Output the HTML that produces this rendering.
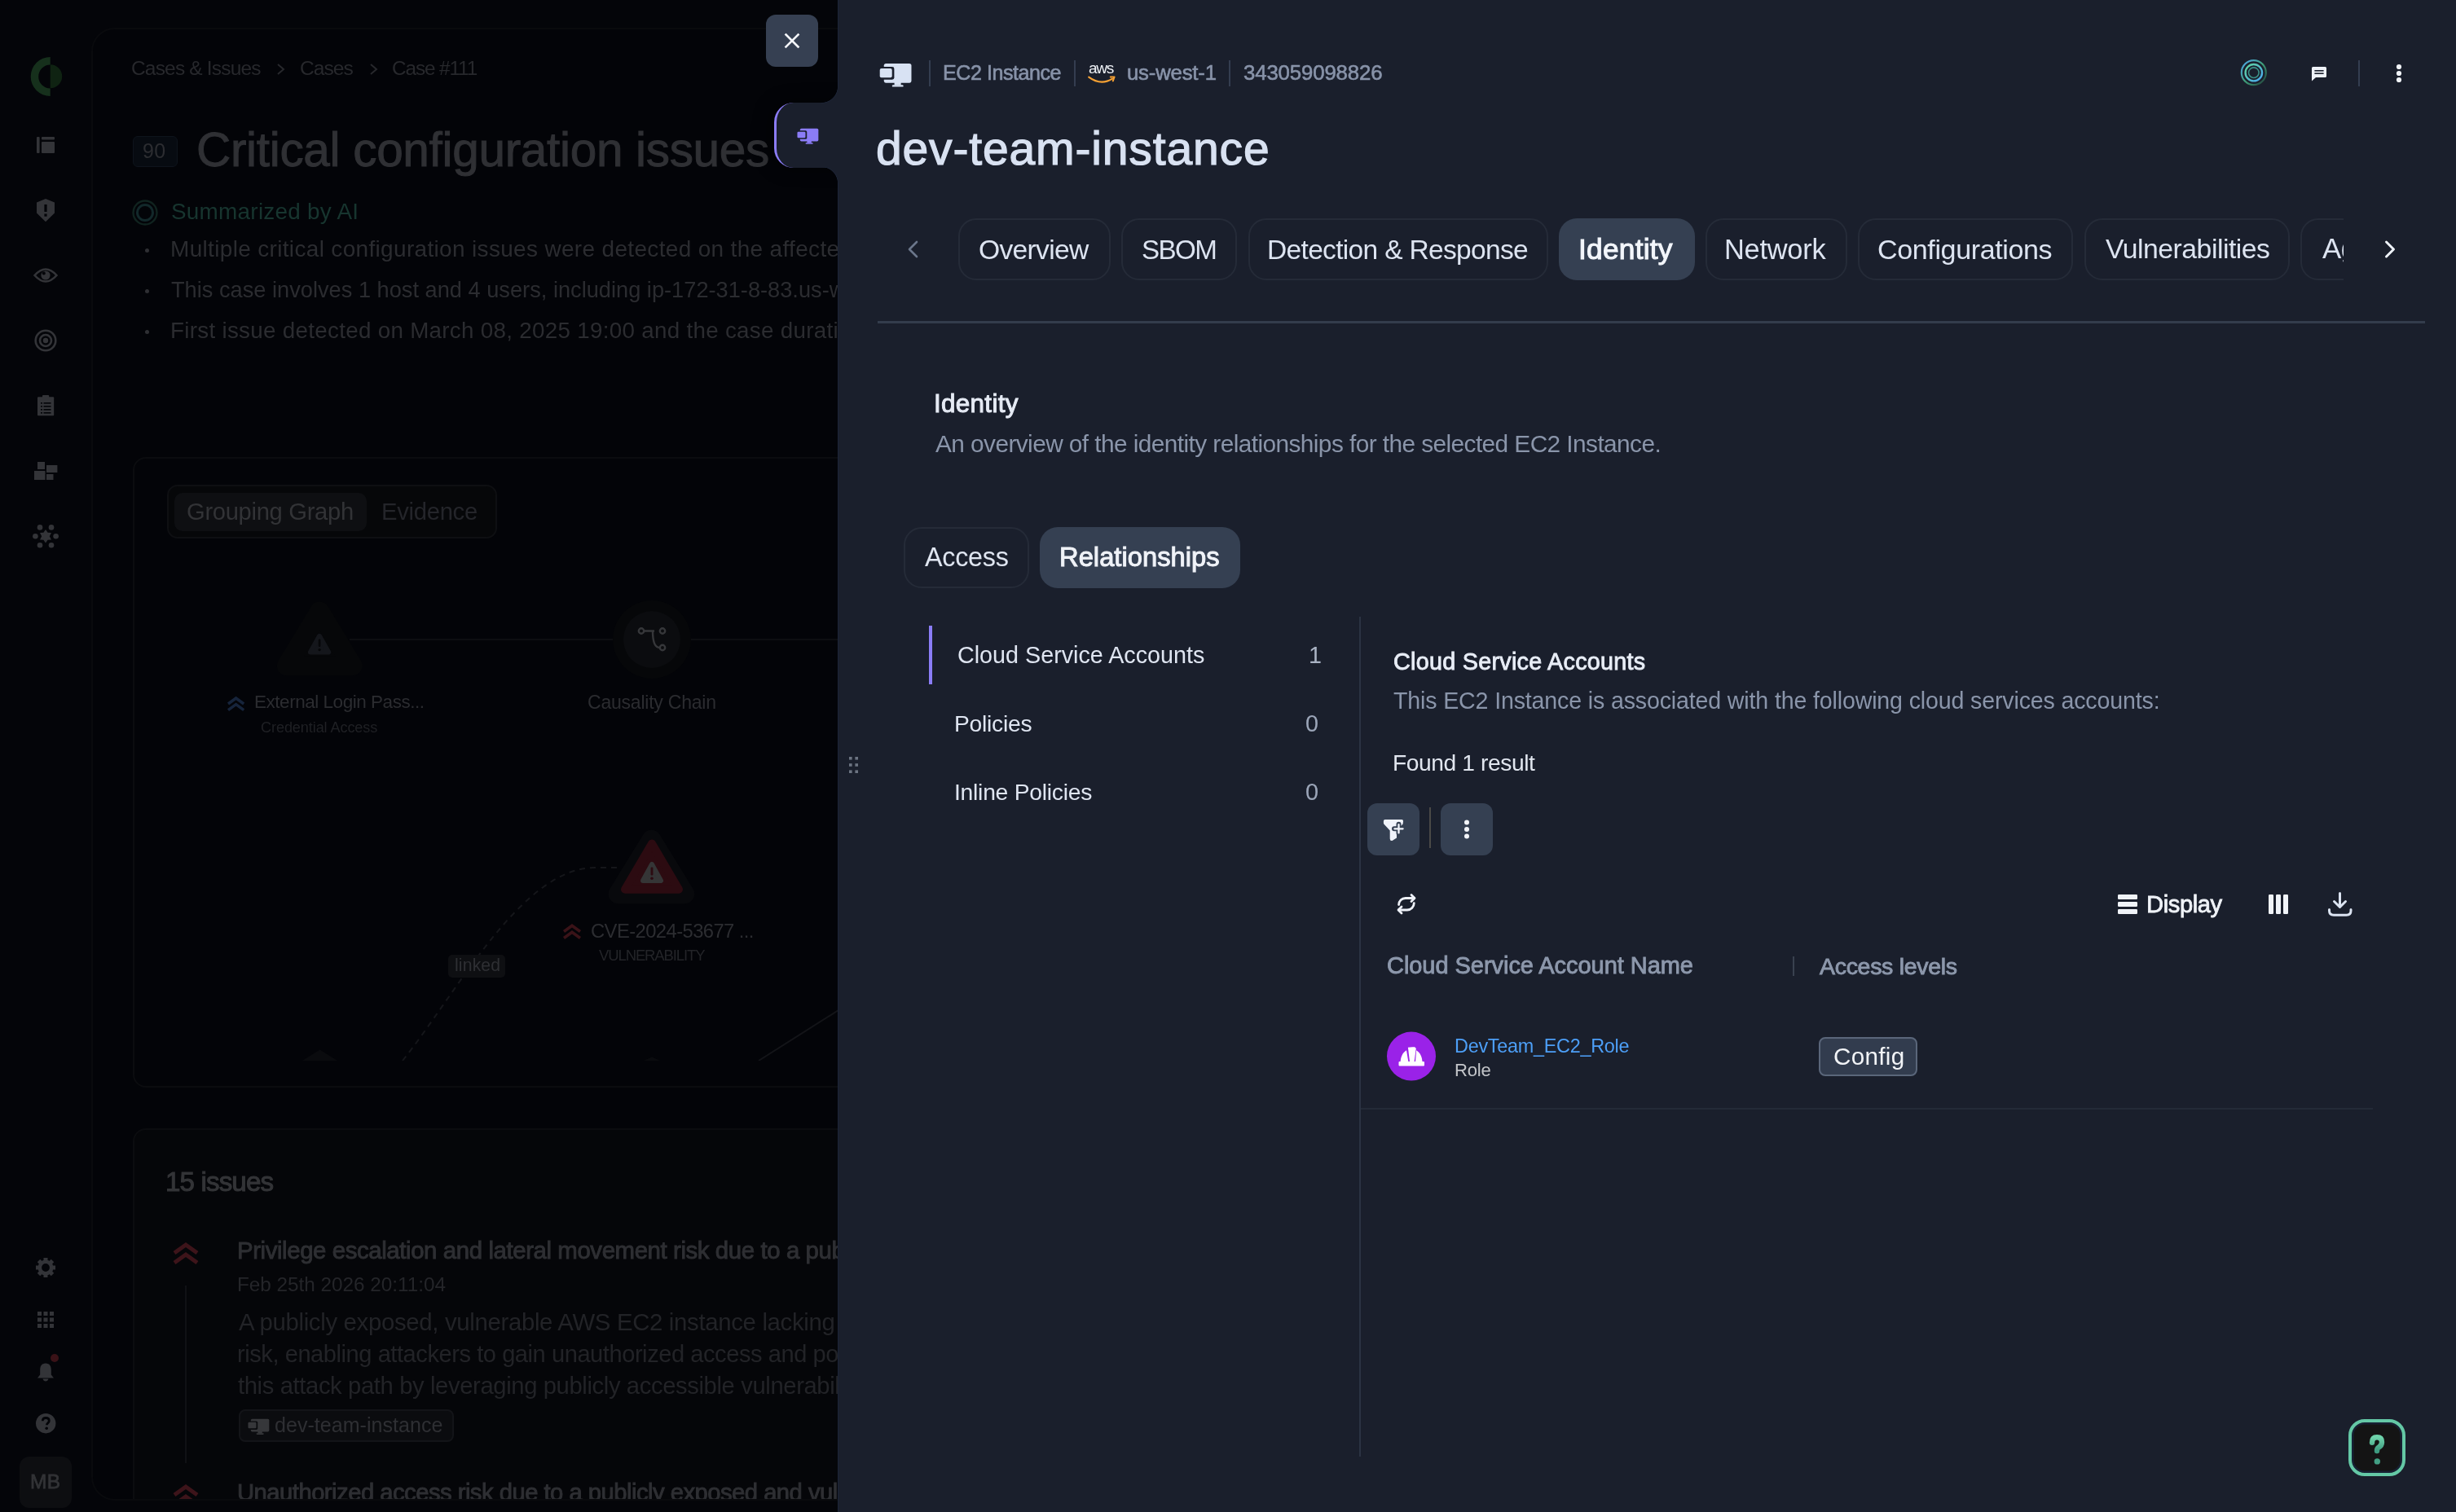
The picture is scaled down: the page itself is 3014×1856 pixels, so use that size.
<!DOCTYPE html><html><head><meta charset="utf-8"><style>
html,body{margin:0;padding:0;}
body{width:3014px;height:1856px;overflow:hidden;background:#040509;position:relative;font-family:"Liberation Sans",sans-serif;}
.t{position:absolute;white-space:nowrap;will-change:transform;}
.b{position:absolute;box-sizing:border-box;}
svg.b{overflow:visible}
</style></head><body><svg class="b" style="left:34.00px;top:68.00px;" width="46.00" height="52.00" viewBox="0 0 46 52"><path d="M27.7 2 A24 24 0 0 0 27.7 50 L27.7 40.5 A14.3 14.3 0 0 1 27.7 11.5 Z" fill="#16301c"/><path d="M27.7 11.3 A14.5 14.5 0 0 1 27.7 40.3 Z" fill="#0f2312"/></svg><svg class="b" style="left:45.00px;top:168.00px;" width="22.00" height="20.00" viewBox="0 0 22 20"><rect x="0" y="0" width="3.6" height="20" rx="1" fill="#333438"/><rect x="6" y="0" width="16" height="3.6" rx="1" fill="#333438"/><rect x="6" y="6" width="16" height="14" rx="1" fill="#333438"/></svg><svg class="b" style="left:45.00px;top:243.60px;" width="22.00" height="28.20" viewBox="0 0 22 28.2"><path d="M11 0 L22 4.5 V17.5 L11 28.2 L0 17.5 V4.5 Z" fill="#333438"/><rect x="9.4" y="7" width="3.2" height="9" fill="#030408"/><rect x="9.4" y="18.5" width="3.2" height="3.2" fill="#030408"/></svg><svg class="b" style="left:40.00px;top:327.00px;" width="32.00" height="22.00" viewBox="0 0 32 22"><path d="M2.5 11 Q16 -4 29.5 11 Q16 26 2.5 11 Z" fill="none" stroke="#333438" stroke-width="2.6"/><circle cx="16" cy="11" r="5.6" fill="#333438"/><circle cx="13.8" cy="8.6" r="2" fill="#030408"/></svg><svg class="b" style="left:42.00px;top:404.00px;" width="28.00" height="28.00" viewBox="0 0 28 28"><circle cx="14" cy="14" r="12.3" fill="none" stroke="#333438" stroke-width="2.6"/><circle cx="14" cy="14" r="7" fill="none" stroke="#333438" stroke-width="2.6"/><circle cx="14" cy="14" r="3.2" fill="#333438"/></svg><svg class="b" style="left:45.80px;top:485.00px;" width="20.20" height="25.30" viewBox="0 0 20.2 25.3"><rect x="0" y="2.2" width="20.2" height="23.1" rx="1" fill="#333438"/><rect x="6" y="0" width="8.2" height="4" rx="1" fill="#333438"/><rect x="4" y="9" width="2" height="1.6" fill="#030408"/><rect x="7.5" y="9" width="9" height="1.6" fill="#030408"/><rect x="4" y="13" width="2" height="1.6" fill="#030408"/><rect x="7.5" y="13" width="9" height="1.6" fill="#030408"/><rect x="4" y="17" width="2" height="1.6" fill="#030408"/><rect x="7.5" y="17" width="9" height="1.6" fill="#030408"/><rect x="4" y="21" width="2" height="1.6" fill="#030408"/><rect x="7.5" y="21" width="9" height="1.6" fill="#030408"/></svg><svg class="b" style="left:41.80px;top:567.00px;" width="28.40" height="22.00" viewBox="0 0 28.4 22"><rect x="4" y="0" width="9" height="9" fill="#333438"/><rect x="0" y="11" width="13.5" height="11" fill="#333438"/><rect x="15" y="4" width="13.4" height="9" fill="#333438"/><rect x="15" y="15" width="8.5" height="7" fill="#333438"/></svg><svg class="b" style="left:40.00px;top:643.60px;" width="32.00" height="28.60" viewBox="0 0 32 28.6"><path d="M16 6 L18.6 9.8 L23 10 L20.8 14.3 L23 18.6 L18.6 18.8 L16 22.6 L13.4 18.8 L9 18.6 L11.2 14.3 L9 10 L13.4 9.8 Z" fill="#333438"/><circle cx="9" cy="3.4" r="3.3" fill="#333438"/><circle cx="23" cy="3.4" r="3.3" fill="#333438"/><circle cx="3.4" cy="14.3" r="3.3" fill="#333438"/><circle cx="28.6" cy="14.3" r="3.3" fill="#333438"/><circle cx="9" cy="25.2" r="3.3" fill="#333438"/><circle cx="23" cy="25.2" r="3.3" fill="#333438"/></svg><svg class="b" style="left:44.00px;top:1544.00px;" width="24.00" height="24.00" viewBox="0 0 24 24"><circle cx="12" cy="12" r="7.2" fill="none" stroke="#333438" stroke-width="4.6"/><rect x="9.5" y="0" width="5" height="6" fill="#333438" transform="rotate(0 12 12)"/><rect x="9.5" y="0" width="5" height="6" fill="#333438" transform="rotate(45 12 12)"/><rect x="9.5" y="0" width="5" height="6" fill="#333438" transform="rotate(90 12 12)"/><rect x="9.5" y="0" width="5" height="6" fill="#333438" transform="rotate(135 12 12)"/><rect x="9.5" y="0" width="5" height="6" fill="#333438" transform="rotate(180 12 12)"/><rect x="9.5" y="0" width="5" height="6" fill="#333438" transform="rotate(225 12 12)"/><rect x="9.5" y="0" width="5" height="6" fill="#333438" transform="rotate(270 12 12)"/><rect x="9.5" y="0" width="5" height="6" fill="#333438" transform="rotate(315 12 12)"/></svg><svg class="b" style="left:46.00px;top:1610.00px;" width="20.00" height="20.00" viewBox="0 0 20 20"><rect x="0" y="0" width="5" height="5" fill="#333438"/><rect x="0" y="7.5" width="5" height="5" fill="#333438"/><rect x="0" y="15" width="5" height="5" fill="#333438"/><rect x="7.5" y="0" width="5" height="5" fill="#333438"/><rect x="7.5" y="7.5" width="5" height="5" fill="#333438"/><rect x="7.5" y="15" width="5" height="5" fill="#333438"/><rect x="15" y="0" width="5" height="5" fill="#333438"/><rect x="15" y="7.5" width="5" height="5" fill="#333438"/><rect x="15" y="15" width="5" height="5" fill="#333438"/></svg><svg class="b" style="left:45.00px;top:1672.00px;" width="22.00" height="24.00" viewBox="0 0 22 24"><path d="M11 1.5 C16 1.5 17.8 5 17.8 10 V15.5 L21 19.5 H1 L4.2 15.5 V10 C4.2 5 6 1.5 11 1.5 Z" fill="#333438"/><path d="M7.5 20.5 H14.5 C14 22.5 12.6 23.5 11 23.5 C9.4 23.5 8 22.5 7.5 20.5 Z" fill="#333438"/></svg><svg class="b" style="left:62.00px;top:1661.50px;" width="10.00" height="10.00" viewBox="0 0 10 10"><circle cx="5" cy="5" r="5" fill="#3a1217"/></svg><svg class="b" style="left:43.80px;top:1735.30px;" width="24.40" height="24.40" viewBox="0 0 24.4 24.4"><circle cx="12.2" cy="12.2" r="12.2" fill="#333438"/><path d="M8.3 9.3 C8.3 6.8 10 5.5 12.3 5.5 C14.7 5.5 16.3 7 16.3 9 C16.3 11.6 13.4 11.9 13.4 14.3" fill="none" stroke="#030408" stroke-width="2.8"/><circle cx="13.2" cy="18.3" r="1.8" fill="#030408"/></svg><div class="b" style="left:24.00px;top:1787.50px;width:64.00px;height:63.80px;background:#0d0e11;border-radius:12px"></div><div class="t" style="left:37.25px;top:1807.12px;font-size:24.42px;line-height:24.42px;font-weight:400;letter-spacing:0.347px;color:#323336;-webkit-text-stroke:0.80px #323336;">MB</div><div class="b" style="left:111.50px;top:34.00px;width:1088.50px;height:1808.00px;background:#030408;border:2px solid #090a0d;border-radius:29px"></div><div class="b" style="left:0;top:0;width:1100px;height:1856px;clip-path:inset(36px 0 16px 113.5px round 27px)"><div class="t" style="left:161.27px;top:72.25px;font-size:24.51px;line-height:24.51px;font-weight:400;letter-spacing:-0.820px;color:#27282c;">Cases &amp; Issues</div><svg class="b" style="left:339.00px;top:77.00px;" width="12.00" height="16.00" viewBox="0 0 12 16"><path d="M2 2 L9 8 L2 14" fill="none" stroke="#27282c" stroke-width="2"/></svg><div class="t" style="left:368.07px;top:72.16px;font-size:24.62px;line-height:24.62px;font-weight:400;letter-spacing:-1.000px;color:#27282c;">Cases</div><svg class="b" style="left:453.00px;top:77.00px;" width="12.00" height="16.00" viewBox="0 0 12 16"><path d="M2 2 L9 8 L2 14" fill="none" stroke="#27282c" stroke-width="2"/></svg><div class="t" style="left:481.28px;top:72.40px;font-size:24.33px;line-height:24.33px;font-weight:400;letter-spacing:-1.110px;color:#27282c;">Case #111</div><div class="b" style="left:162.50px;top:166.50px;width:55.50px;height:38.50px;background:#070b11;border:1.5px solid #0e141c;border-radius:6px;box-sizing:border-box"></div><div class="t" style="left:175.00px;top:173.33px;font-size:25.00px;line-height:25.00px;font-weight:400;letter-spacing:0.300px;color:#2c2d31;">90</div><div class="t" style="left:241.47px;top:155.23px;font-size:58.54px;line-height:58.54px;font-weight:400;letter-spacing:-0.325px;color:#2f3034;-webkit-text-stroke:1.00px #2f3034;">Critical configuration issues for dev-team-instance</div><svg class="b" style="left:162.00px;top:244.50px;" width="32.00" height="32.00" viewBox="0 0 32 32"><circle cx="16" cy="16" r="14.5" fill="none" stroke="#10231f" stroke-width="2.4"/><circle cx="16" cy="16" r="9.5" fill="none" stroke="#12282a" stroke-width="3"/></svg><div class="t" style="left:209.60px;top:245.76px;font-size:27.92px;line-height:27.92px;font-weight:400;letter-spacing:0.241px;color:#17352f;">Summarized by AI</div><div class="b" style="left:178.00px;top:304.70px;width:5.00px;height:5.00px;background:#2e2f33;border-radius:50%"></div><div class="t" style="left:208.76px;top:291.52px;font-size:27.97px;line-height:27.97px;font-weight:400;letter-spacing:0.341px;color:#2b2c30;">Multiple critical configuration issues were detected on the affected host, including exposed credentials</div><div class="b" style="left:178.00px;top:354.80px;width:5.00px;height:5.00px;background:#2e2f33;border-radius:50%"></div><div class="t" style="left:210.46px;top:342.27px;font-size:27.20px;line-height:27.20px;font-weight:400;letter-spacing:0.011px;color:#2b2c30;">This case involves 1 host and 4 users, including ip-172-31-8-83.us-west-1.compute.internal</div><div class="b" style="left:178.00px;top:405.00px;width:5.00px;height:5.00px;background:#2e2f33;border-radius:50%"></div><div class="t" style="left:208.78px;top:391.97px;font-size:27.79px;line-height:27.79px;font-weight:400;letter-spacing:0.289px;color:#2b2c30;">First issue detected on March 08, 2025 19:00 and the case duration is ongoing</div><div class="b" style="left:162.50px;top:561.00px;width:1137.50px;height:774.00px;border:2px solid #0b0c0f;border-radius:16px;background:#030408"></div><div class="b" style="left:204.50px;top:594.80px;width:405.90px;height:66.30px;background:#060709;border:2px solid #0e0f12;border-radius:13px"></div><div class="b" style="left:213.80px;top:604.50px;width:236.10px;height:47.30px;background:#0e0f12;border-radius:10px"></div><div class="t" style="left:229.14px;top:613.78px;font-size:29.20px;line-height:29.20px;font-weight:400;letter-spacing:-0.318px;color:#323336;">Grouping Graph</div><div class="t" style="left:467.66px;top:613.73px;font-size:29.25px;line-height:29.25px;font-weight:400;letter-spacing:-0.303px;color:#24252a;">Evidence</div><svg class="b" style="left:0.00px;top:0.00px;clip-path:inset(662px 0 0 0)" width="1100.00" height="1302.00" viewBox="0 0 1100 1302"><line x1="429" y1="785" x2="752" y2="785" stroke="#0d0e11" stroke-width="2"/><line x1="848" y1="785" x2="1100" y2="785" stroke="#0d0e11" stroke-width="2"/><path d="M494 1302 C560 1220 640 1065 730 1065 H762" fill="none" stroke="#15161a" stroke-width="2" stroke-dasharray="7 6"/><line x1="1040" y1="1233" x2="931" y2="1302" stroke="#131418" stroke-width="2"/><path d="M392.25 750.5 L432.7 817.2 H351.8 Z" fill="#060709" stroke="#060709" stroke-width="24" stroke-linejoin="round"/><path d="M392 780.8 L403.2 800.6 H380.9 Z" fill="#14161b" stroke="#14161b" stroke-width="6" stroke-linejoin="round"/><rect x="390.8" y="784.5" width="2.6" height="9.5" rx="1.2" fill="#060709"/><circle cx="392.1" cy="797.6" r="1.7" fill="#060709"/><circle cx="800" cy="785" r="48" fill="#060709"/><circle cx="800" cy="785" r="35" fill="#0b0c0f"/><g fill="none" stroke="#36373a" stroke-width="2.4"><circle cx="787" cy="774.5" r="3.2"/><circle cx="813" cy="774.5" r="3.2"/><circle cx="813" cy="795" r="3.2"/><path d="M790.5 774.5 H803 M801 774.5 Q801 795 809.5 795"/></g><path d="M799.5 1030.7 L840.3 1097.3 H758.6 Z" fill="#08090c" stroke="#08090c" stroke-width="24" stroke-linejoin="round"/><path d="M800 1035.5 L833 1091.8 H767 Z" fill="#2c0b11" stroke="#2c0b11" stroke-width="10" stroke-linejoin="round"/><path d="M800 1061 L811 1081 H789 Z" fill="#353536" stroke="#353536" stroke-width="6" stroke-linejoin="round"/><rect x="798.6" y="1064.5" width="2.8" height="10" rx="1.2" fill="#2c0b11"/><circle cx="800" cy="1078.2" r="1.8" fill="#2c0b11"/><path d="M392.5 1288.5 L414 1302 H371 Z" fill="#0a0b0e"/><path d="M800 1297.5 L810 1302 H790 Z" fill="#0a0b0e"/></svg><svg class="b" style="left:278.00px;top:854.60px;" width="23.20" height="18.60" viewBox="0 0 23.2 18.6"><path d="M2 9 L11.6 2 L21.2 9 M2 16.6 L11.6 9.6 L21.2 16.6" fill="none" stroke="#16243b" stroke-width="3.5"/></svg><div class="t" style="left:311.90px;top:851.36px;font-size:22.49px;line-height:22.49px;font-weight:400;letter-spacing:-0.461px;color:#2b2c30;">External Login Pass...</div><div class="t" style="left:320.09px;top:884.07px;font-size:18.11px;line-height:18.11px;font-weight:400;letter-spacing:-0.101px;color:#1f2024;">Credential Access</div><div class="t" style="left:720.85px;top:850.89px;font-size:23.05px;line-height:23.05px;font-weight:400;letter-spacing:-0.241px;color:#2b2c30;">Causality Chain</div><div class="b" style="left:550.20px;top:1172.00px;width:70.30px;height:27.60px;background:#0e0f12;border-radius:5px"></div><div class="t" style="left:558.23px;top:1174.44px;font-size:21.21px;line-height:21.21px;font-weight:400;letter-spacing:0.139px;color:#2e2f33;">linked</div><svg class="b" style="left:690.00px;top:1134.00px;" width="24.00" height="20.00" viewBox="0 0 24 20"><path d="M2 9.5 L12 2.2 L22 9.5 M2 17.5 L12 10.2 L22 17.5" fill="none" stroke="#3a1318" stroke-width="3.6"/></svg><div class="t" style="left:724.81px;top:1131.04px;font-size:23.80px;line-height:23.80px;font-weight:400;letter-spacing:-0.582px;color:#2c2d31;">CVE-2024-53677 ...</div><div class="t" style="left:734.80px;top:1164.32px;font-size:18.52px;line-height:18.52px;font-weight:400;letter-spacing:-1.127px;color:#232428;">VULNERABILITY</div><div class="b" style="left:162.50px;top:1385.00px;width:1137.50px;height:565.00px;background:#050609;border:2px solid #0b0c0f;border-radius:16px"></div><div class="t" style="left:202.72px;top:1433.94px;font-size:33.14px;line-height:33.14px;font-weight:400;letter-spacing:-0.866px;color:#333437;-webkit-text-stroke:1.08px #333437;">15 issues</div><svg class="b" style="left:211.00px;top:1524.80px;" width="34.00" height="28.00" viewBox="0 0 34 28"><path d="M3 13 L17 3 L31 13 M3 25 L17 15 L31 25" fill="none" stroke="#3d141a" stroke-width="5"/></svg><div class="t" style="left:290.72px;top:1519.99px;font-size:29.42px;line-height:29.42px;font-weight:400;letter-spacing:-0.415px;color:#2e2f33;-webkit-text-stroke:0.94px #2e2f33;">Privilege escalation and lateral movement risk due to a publicly exposed instance</div><div class="t" style="left:290.65px;top:1565.09px;font-size:24.35px;line-height:24.35px;font-weight:400;letter-spacing:-0.036px;color:#242529;">Feb 25th 2026 20:11:04</div><div class="t" style="left:292.60px;top:1607.73px;font-size:29.37px;line-height:29.37px;font-weight:400;letter-spacing:-0.330px;color:#222327;">A publicly exposed, vulnerable AWS EC2 instance lacking IMDSv2 creates a significant</div><div class="t" style="left:290.86px;top:1648.19px;font-size:29.07px;line-height:29.07px;font-weight:400;letter-spacing:-0.445px;color:#222327;">risk, enabling attackers to gain unauthorized access and potentially escalate privileges</div><div class="t" style="left:292.31px;top:1687.47px;font-size:29.21px;line-height:29.21px;font-weight:400;letter-spacing:-0.375px;color:#222327;">this attack path by leveraging publicly accessible vulnerabilities in the instance</div><div class="b" style="left:292.60px;top:1730.00px;width:264.10px;height:39.50px;background:#0b0c0f;border:2px solid #131418;border-radius:8px;box-sizing:border-box"></div><svg class="b" style="left:304.00px;top:1740.60px;" width="27.00" height="20.00" viewBox="0 0 41 30"><rect x="5.8" y="1" width="34.2" height="24" rx="2.6" fill="#36373a"/><rect x="18.8" y="24" width="8.2" height="4" fill="#36373a"/><rect x="16" y="27.6" width="14" height="2.4" rx="1.2" fill="#36373a"/><rect x="-1" y="5" width="19.6" height="16" rx="2.5" fill="#0b0c0f"/><rect x="0.7" y="7" width="15.2" height="11.5" rx="2" fill="#36373a"/></svg><div class="t" style="left:337.00px;top:1736.79px;font-size:25.05px;line-height:25.05px;font-weight:400;letter-spacing:0.025px;color:#2e2f33;">dev-team-instance</div><div class="b" style="left:226.80px;top:1577.80px;width:2.00px;height:218.60px;background:#101115"></div><svg class="b" style="left:211.00px;top:1822.00px;" width="34.00" height="28.00" viewBox="0 0 34 28"><path d="M3 13 L17 3 L31 13 M3 25 L17 15 L31 25" fill="none" stroke="#3d141a" stroke-width="5"/></svg><div class="t" style="left:291.03px;top:1818.16px;font-size:29.22px;line-height:29.22px;font-weight:400;letter-spacing:-0.515px;color:#2e2f33;-webkit-text-stroke:0.94px #2e2f33;">Unauthorized access risk due to a publicly exposed and vulnerable instance</div></div><div class="b" style="left:950.00px;top:126.00px;width:110.00px;height:79.50px;background:#1a1f2c;border-left:3px solid #8b7cf6;border-radius:24px 0 0 24px;box-shadow:-4px 0 22px rgba(0,0,0,0.45)"></div><div class="b" style="left:1028.00px;top:0.00px;width:1986.00px;height:1856.00px;background:#1a1f2c;border-left:1px solid #1c2437"></div><div class="b" style="left:1020.00px;top:126.60px;width:60.00px;height:78.40px;background:#1a1f2c"></div><div class="b" style="left:1008.00px;top:106.00px;width:20.50px;height:20.80px;background:radial-gradient(circle at 0 0, rgba(26,31,44,0) 19.6px, #1c2437 20.3px, #1a1f2c 21.2px)"></div><div class="b" style="left:1008.00px;top:204.80px;width:20.50px;height:20.70px;background:radial-gradient(circle at 0 100%, rgba(26,31,44,0) 19.6px, #1c2437 20.3px, #1a1f2c 21.2px)"></div><svg class="b" style="left:978.00px;top:156.80px;" width="27.00" height="19.80" viewBox="0 0 41 30"><rect x="5.8" y="1" width="34.2" height="24" rx="2.6" fill="#8b7cf6"/><rect x="18.8" y="24" width="8.2" height="4" fill="#8b7cf6"/><rect x="16" y="27.6" width="14" height="2.4" rx="1.2" fill="#8b7cf6"/><rect x="-1" y="5" width="19.6" height="16" rx="2.5" fill="#1a1f2c"/><rect x="0.7" y="7" width="15.2" height="11.5" rx="2" fill="#8b7cf6"/></svg><div class="b" style="left:940.00px;top:18.00px;width:64.00px;height:64.00px;background:#364052;border-radius:12px"></div><svg class="b" style="left:962.00px;top:40.00px;" width="20.00" height="20.00" viewBox="0 0 20 20"><path d="M2.5 2.5 L17.5 17.5 M17.5 2.5 L2.5 17.5" stroke="#f4f6fa" stroke-width="2.6" stroke-linecap="square"/></svg><svg class="b" style="left:1079.00px;top:76.50px;" width="40.50" height="29.60" viewBox="0 0 41 30"><rect x="5.8" y="1" width="34.2" height="24" rx="2.6" fill="#d8e2f3"/><rect x="18.8" y="24" width="8.2" height="4" fill="#d8e2f3"/><rect x="16" y="27.6" width="14" height="2.4" rx="1.2" fill="#d8e2f3"/><rect x="-1" y="5" width="19.6" height="16" rx="2.5" fill="#1a1f2c"/><rect x="0.7" y="7" width="15.2" height="11.5" rx="2" fill="#d8e2f3"/></svg><div class="b" style="left:1140.00px;top:74.00px;width:2.00px;height:31.60px;background:#343d50"></div><div class="b" style="left:1317.70px;top:74.00px;width:2.00px;height:31.60px;background:#343d50"></div><div class="b" style="left:1508.00px;top:74.00px;width:2.00px;height:31.60px;background:#343d50"></div><div class="t" style="left:1157.29px;top:77.14px;font-size:25.11px;line-height:25.11px;font-weight:400;letter-spacing:-0.474px;color:#8893a9;-webkit-text-stroke:0.60px #8893a9;">EC2 Instance</div><div class="t" style="left:1336.24px;top:73.83px;font-size:19.10px;line-height:19.10px;font-weight:400;letter-spacing:-1.380px;color:#eef1f6;">aws</div><svg class="b" style="left:1335.00px;top:93.00px;" width="34.00" height="10.00" viewBox="0 0 34 10"><path d="M1.2 1.6 Q16 12.5 30 3.6" fill="none" stroke="#f5a033" stroke-width="2.2" stroke-linecap="round"/><path d="M27.8 1.4 L32.6 1.4 L30.8 6.4" fill="none" stroke="#f5a033" stroke-width="2" stroke-linecap="round" stroke-linejoin="round"/></svg><div class="t" style="left:1382.76px;top:76.64px;font-size:25.70px;line-height:25.70px;font-weight:400;letter-spacing:-0.166px;color:#8893a9;-webkit-text-stroke:0.60px #8893a9;">us-west-1</div><div class="t" style="left:1526.27px;top:76.57px;font-size:25.79px;line-height:25.79px;font-weight:400;letter-spacing:-0.139px;color:#8893a9;-webkit-text-stroke:0.60px #8893a9;">343059098826</div><svg class="b" style="left:2748.00px;top:71.00px;" width="36.00" height="36.00" viewBox="0 0 36 36"><defs><linearGradient id="rg1" x1="0" y1="0" x2="1" y2="1"><stop offset="0" stop-color="#4fa6f0"/><stop offset="0.5" stop-color="#3f9f7a"/><stop offset="1" stop-color="#1f3b35"/></linearGradient><linearGradient id="rg2" x1="0" y1="0" x2="1" y2="1"><stop offset="0" stop-color="#5fd39a"/><stop offset="1" stop-color="#4aa8f2"/></linearGradient></defs><circle cx="17.8" cy="18.2" r="15" fill="none" stroke="url(#rg1)" stroke-width="2.2"/><circle cx="17.8" cy="18.2" r="10.2" fill="none" stroke="url(#rg2)" stroke-width="2.4"/><circle cx="17.8" cy="18.2" r="6.3" fill="none" stroke="#3b8f86" stroke-width="1.6"/></svg><svg class="b" style="left:2836.00px;top:81.00px;" width="20.00" height="19.00" viewBox="0 0 20 19"><path d="M2.5 1 H17.5 Q19 1 19 2.5 V12.5 Q19 14 17.5 14 H6 L1 18.5 V2.5 Q1 1 2.5 1 Z" fill="#eef2f8"/><rect x="4.4" y="5" width="11.2" height="1.6" fill="#1a1f2c"/><rect x="4.4" y="8.4" width="11.2" height="1.6" fill="#1a1f2c"/></svg><div class="b" style="left:2894.00px;top:74.30px;width:2.00px;height:31.50px;background:#343d50"></div><svg class="b" style="left:2940.00px;top:78.00px;" width="8.00" height="24.00" viewBox="0 0 8 24"><circle cx="4" cy="4" r="3.1" fill="#f0f3f8"/><circle cx="4" cy="12" r="3.1" fill="#f0f3f8"/><circle cx="4" cy="20" r="3.1" fill="#f0f3f8"/></svg><div class="t" style="left:1075.32px;top:153.68px;font-size:57.07px;line-height:57.07px;font-weight:400;letter-spacing:0.827px;color:#d9e2f2;-webkit-text-stroke:1.20px #d9e2f2;">dev-team-instance</div><svg class="b" style="left:1110.00px;top:294.00px;" width="20.00" height="24.00" viewBox="0 0 20 24"><path d="M15 3 L6 12 L15 21" fill="none" stroke="#6b768b" stroke-width="2.6" stroke-linecap="round" stroke-linejoin="round"/></svg><div class="b" style="left:0;top:0;width:3014px;height:400px;clip-path:inset(0 138px 0 1150px)"><div class="b" style="left:1176.40px;top:268.00px;width:186.90px;height:76.00px;border:2px solid #252b38;border-radius:22px"></div><div class="t" style="left:1201.45px;top:289.51px;font-size:33.65px;line-height:33.65px;font-weight:400;letter-spacing:-0.703px;color:#dde4f1;">Overview</div><div class="b" style="left:1376.00px;top:268.00px;width:142.30px;height:76.00px;border:2px solid #252b38;border-radius:22px"></div><div class="t" style="left:1400.84px;top:289.94px;font-size:33.15px;line-height:33.15px;font-weight:400;letter-spacing:-1.547px;color:#dde4f1;">SBOM</div><div class="b" style="left:1531.50px;top:268.00px;width:368.50px;height:76.00px;border:2px solid #252b38;border-radius:22px"></div><div class="t" style="left:1555.32px;top:289.61px;font-size:33.53px;line-height:33.53px;font-weight:400;letter-spacing:-0.672px;color:#dde4f1;">Detection &amp; Response</div><div class="b" style="left:1912.70px;top:268.00px;width:167.30px;height:76.00px;background:#354052;border-radius:22px"></div><div class="t" style="left:1937.36px;top:288.06px;font-size:35.36px;line-height:35.36px;font-weight:400;letter-spacing:0.220px;color:#f3f6fb;-webkit-text-stroke:1.08px #f3f6fb;">Identity</div><div class="b" style="left:2092.80px;top:268.00px;width:174.60px;height:76.00px;border:2px solid #252b38;border-radius:22px"></div><div class="t" style="left:2116.25px;top:288.85px;font-size:34.43px;line-height:34.43px;font-weight:400;letter-spacing:-0.268px;color:#dde4f1;">Network</div><div class="b" style="left:2280.00px;top:268.00px;width:264.00px;height:76.00px;border:2px solid #252b38;border-radius:22px"></div><div class="t" style="left:2304.30px;top:289.15px;font-size:34.07px;line-height:34.07px;font-weight:400;letter-spacing:-0.388px;color:#dde4f1;">Configurations</div><div class="b" style="left:2557.70px;top:268.00px;width:252.30px;height:76.00px;border:2px solid #252b38;border-radius:22px"></div><div class="t" style="left:2583.50px;top:289.43px;font-size:33.74px;line-height:33.74px;font-weight:400;letter-spacing:-0.488px;color:#dde4f1;">Vulnerabilities</div><div class="b" style="left:2823.00px;top:268.00px;width:177.00px;height:76.00px;border:2px solid #252b38;border-radius:22px"></div><div class="t" style="left:2849.50px;top:288.46px;font-size:34.88px;line-height:34.88px;font-weight:400;letter-spacing:-0.500px;color:#dde4f1;">Agents</div></div><svg class="b" style="left:2922.50px;top:294.00px;" width="20.00" height="24.00" viewBox="0 0 20 24"><path d="M5.5 3 L14.5 12 L5.5 21" fill="none" stroke="#eef2f8" stroke-width="3" stroke-linecap="round" stroke-linejoin="round"/></svg><div class="b" style="left:1077.00px;top:394.00px;width:1899.00px;height:2.50px;background:#333c4c"></div><div class="t" style="left:1146.05px;top:480.38px;font-size:31.44px;line-height:31.44px;font-weight:400;letter-spacing:0.291px;color:#e6ebf5;-webkit-text-stroke:0.96px #e6ebf5;">Identity</div><div class="t" style="left:1148.40px;top:529.72px;font-size:29.85px;line-height:29.85px;font-weight:400;letter-spacing:-0.585px;color:#8a95aa;">An overview of the identity relationships for the selected EC2 Instance.</div><div class="b" style="left:1108.50px;top:646.70px;width:154.50px;height:74.90px;border:2px solid #252b38;border-radius:22px"></div><div class="t" style="left:1135.00px;top:668.15px;font-size:32.31px;line-height:32.31px;font-weight:400;letter-spacing:-0.251px;color:#dfe5f0;">Access</div><div class="b" style="left:1276.00px;top:646.70px;width:245.80px;height:74.90px;background:#354052;border-radius:22px"></div><div class="t" style="left:1299.89px;top:667.78px;font-size:32.73px;line-height:32.73px;font-weight:400;letter-spacing:0.015px;color:#f0f3f8;-webkit-text-stroke:1.01px #f0f3f8;">Relationships</div><div class="b" style="left:1139.80px;top:768.00px;width:4.60px;height:72.00px;background:#8b7df7"></div><div class="t" style="left:1174.96px;top:789.96px;font-size:28.75px;line-height:28.75px;font-weight:400;letter-spacing:-0.017px;color:#dfe5f1;">Cloud Service Accounts</div><div class="t" style="left:1605.99px;top:789.93px;font-size:28.78px;line-height:28.78px;font-weight:400;letter-spacing:0.000px;color:#aab3c4;">1</div><div class="t" style="left:1171.44px;top:874.28px;font-size:28.25px;line-height:28.25px;font-weight:400;letter-spacing:-0.249px;color:#dfe5f1;">Policies</div><div class="t" style="left:1601.85px;top:873.83px;font-size:28.78px;line-height:28.78px;font-weight:400;letter-spacing:0.000px;color:#9ba5b8;">0</div><div class="t" style="left:1171.15px;top:958.44px;font-size:28.30px;line-height:28.30px;font-weight:400;letter-spacing:-0.260px;color:#dfe5f1;">Inline Policies</div><div class="t" style="left:1601.84px;top:957.91px;font-size:28.92px;line-height:28.92px;font-weight:400;letter-spacing:0.000px;color:#9ba5b8;">0</div><svg class="b" style="left:1042.00px;top:929.00px;" width="11.00" height="20.00" viewBox="0 0 11 20"><rect x="0" y="0" width="3.6" height="3.6" fill="#6c7482"/><rect x="0" y="8.2" width="3.6" height="3.6" fill="#6c7482"/><rect x="0" y="16.4" width="3.6" height="3.6" fill="#6c7482"/><rect x="7.4" y="0" width="3.6" height="3.6" fill="#6c7482"/><rect x="7.4" y="8.2" width="3.6" height="3.6" fill="#6c7482"/><rect x="7.4" y="16.4" width="3.6" height="3.6" fill="#6c7482"/></svg><div class="b" style="left:1668.40px;top:756.60px;width:2.00px;height:1031.40px;background:#2b3343"></div><div class="t" style="left:1709.70px;top:798.47px;font-size:28.74px;line-height:28.74px;font-weight:400;letter-spacing:0.275px;color:#e8edf6;-webkit-text-stroke:0.87px #e8edf6;">Cloud Service Accounts</div><div class="t" style="left:1710.13px;top:846.39px;font-size:28.59px;line-height:28.59px;font-weight:400;letter-spacing:-0.147px;color:#8a95aa;">This EC2 Instance is associated with the following cloud services accounts:</div><div class="t" style="left:1709.04px;top:922.32px;font-size:28.20px;line-height:28.20px;font-weight:400;letter-spacing:-0.407px;color:#e1e6ef;">Found 1 result</div><div class="b" style="left:1678.00px;top:986.00px;width:64.00px;height:64.00px;background:#354052;border-radius:12px"></div><svg class="b" style="left:1697.00px;top:1004.00px;" width="27.00" height="27.00" viewBox="0 0 27 27"><path d="M0.9 3.8 Q0.9 2 2.8 2 H23.3 Q25.2 2 25 4.2 L24.6 7.4 L17 15 V24.6 L11.5 28 Q8.7 28.5 8.7 25.5 V15.4 L1.5 7.8 Q0.9 7 0.9 6 Z" fill="#f0f3fa"/><path d="M19.5 7.8 V18.8 M14 13.3 H25" stroke="#354052" stroke-width="6" stroke-linecap="round"/><path d="M19.5 8.2 V18.4 M14.4 13.3 H24.6" stroke="#f0f3fa" stroke-width="2.3" stroke-linecap="round"/></svg><div class="b" style="left:1754.00px;top:991.00px;width:2.00px;height:50.00px;background:#4a4947"></div><div class="b" style="left:1767.70px;top:986.00px;width:64.20px;height:64.00px;background:#354052;border-radius:12px"></div><svg class="b" style="left:1796.00px;top:1005.00px;" width="8.00" height="26.00" viewBox="0 0 8 26"><circle cx="4" cy="4.5" r="3" fill="#f3f5f9"/><circle cx="4" cy="13" r="3" fill="#f3f5f9"/><circle cx="4" cy="21.5" r="3" fill="#f3f5f9"/></svg><svg class="b" style="left:1713.00px;top:1096.00px;" width="26.00" height="28.00" viewBox="0 0 26 28"><g fill="none" stroke="#eef1f8" stroke-width="2.8" stroke-linecap="round" stroke-linejoin="round"><path d="M3.6 14.6 A8.2 8.2 0 0 1 11.8 6.5 H22.6"/><path d="M19 2.6 L23 6.5 L19 10.4"/><path d="M22.3 12.6 A8.4 8.4 0 0 1 14 21 H3.4"/><path d="M7 17 L3 21 L7 25"/></g></svg><svg class="b" style="left:2599.00px;top:1098.00px;" width="24.00" height="24.00" viewBox="0 0 24 24"><rect x="0" y="0" width="24" height="6" rx="1.2" fill="#f0f3f8"/><rect x="0" y="9" width="24" height="6" rx="1.2" fill="#f0f3f8"/><rect x="0" y="18" width="24" height="6" rx="1.2" fill="#f0f3f8"/></svg><div class="t" style="left:2634.07px;top:1095.60px;font-size:29.17px;line-height:29.17px;font-weight:400;letter-spacing:-0.408px;color:#f0f3f8;-webkit-text-stroke:0.80px #f0f3f8;">Display</div><svg class="b" style="left:2784.00px;top:1098.00px;" width="24.00" height="24.00" viewBox="0 0 24 24"><rect x="0" y="0" width="6" height="24" rx="1.2" fill="#f0f3f8"/><rect x="9" y="0" width="6" height="24" rx="1.2" fill="#f0f3f8"/><rect x="18" y="0" width="6" height="24" rx="1.2" fill="#f0f3f8"/></svg><svg class="b" style="left:2856.00px;top:1094.00px;" width="32.00" height="32.00" viewBox="0 0 32 32"><path d="M15.5 2.5 V19 M8.5 12.5 L15.5 19.5 L22.5 12.5" fill="none" stroke="#dbe3f1" stroke-width="3" stroke-linecap="round" stroke-linejoin="round"/><path d="M2.5 22.5 V24 Q2.5 29.3 8 29.3 H23.5 Q29 29.3 29 24 V22.5" fill="none" stroke="#dbe3f1" stroke-width="3" stroke-linecap="round"/></svg><div class="t" style="left:1701.80px;top:1171.45px;font-size:28.99px;line-height:28.99px;font-weight:400;letter-spacing:-0.040px;color:#8d98ac;-webkit-text-stroke:0.90px #8d98ac;">Cloud Service Account Name</div><div class="b" style="left:2200.00px;top:1174.00px;width:2.00px;height:24.00px;background:#39414f"></div><div class="t" style="left:2232.75px;top:1171.88px;font-size:28.49px;line-height:28.49px;font-weight:400;letter-spacing:-0.290px;color:#8d98ac;-webkit-text-stroke:0.90px #8d98ac;">Access levels</div><svg class="b" style="left:1702.00px;top:1267.00px;" width="60.00" height="60.00" viewBox="0 0 60 60"><circle cx="30" cy="29.6" r="30" fill="#9a22e8"/><rect x="14.5" y="36.1" width="31.5" height="5.5" rx="1" fill="#ffffff"/><path d="M16.6 37.7 C16.6 30 19.5 25 24 22.2 L26.6 37.7 Z" fill="#ffffff"/><path d="M25.9 18.8 Q30 17.8 34.2 18.3 L35.8 20 L33.4 37.7 H28.2 Z" fill="#ffffff"/><path d="M36.1 22.2 C40.6 25 43.5 30 43.5 37.7 H34.9 Z" fill="#ffffff"/></svg><div class="t" style="left:1785.13px;top:1273.19px;font-size:23.40px;line-height:23.40px;font-weight:400;letter-spacing:-0.262px;color:#4d9ff7;">DevTeam_EC2_Role</div><div class="t" style="left:1785.23px;top:1303.31px;font-size:22.07px;line-height:22.07px;font-weight:400;letter-spacing:-0.199px;color:#c3c5c9;">Role</div><div class="b" style="left:2232.00px;top:1273.00px;width:120.60px;height:47.80px;background:#323c4e;border:2px solid #5a667a;border-radius:8px"></div><div class="t" style="left:2249.52px;top:1281.91px;font-size:29.64px;line-height:29.64px;font-weight:400;letter-spacing:0.321px;color:#f2f4f7;">Config</div><div class="b" style="left:1670.00px;top:1360.00px;width:1242.00px;height:2.00px;background:#232a37"></div><div class="b" style="left:2881.80px;top:1741.80px;width:70.00px;height:70.20px;background:#141414;border:4px solid #64c8a6;border-radius:20px;box-shadow:inset 0 0 0 2.5px #172033"></div><svg class="b" style="left:2900.00px;top:1755.00px;" width="32.00" height="45.00" viewBox="0 0 32 45"><defs><linearGradient id="qg" x1="0" y1="0" x2="0" y2="1"><stop offset="0" stop-color="#6fd3ab"/><stop offset="1" stop-color="#3d9a7f"/></linearGradient></defs><path d="M11 15.8 Q11 9.3 17 9.3 Q23 9.3 23 15.2 Q23 19.5 19 21.8 Q17 23 17 26" fill="none" stroke="url(#qg)" stroke-width="6.4" stroke-linecap="round" stroke-linejoin="round"/><circle cx="17.3" cy="38.9" r="3.7" fill="#429f83"/></svg></body></html>
